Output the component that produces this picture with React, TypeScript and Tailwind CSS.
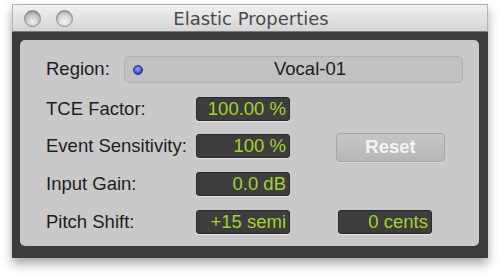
import React from "react";

const font = { fontFamily: '"Liberation Sans", Arial, sans-serif' };

function Light({ dark }: { dark?: boolean }) {
  return (
    <div
      className={`w-[17px] h-[17px] rounded-full border border-[#8c8c8c] ${
        dark
          ? "bg-[radial-gradient(circle_at_50%_70%,#f2f2f2_0%,#c8c8c8_45%,#9a9a9a_100%)]"
          : "bg-[radial-gradient(circle_at_50%_70%,#f6f6f6_0%,#d6d6d6_50%,#a8a8a8_100%)]"
      } shadow-[inset_0_1px_1px_rgba(0,0,0,0.25)]`}
    />
  );
}

function Field({ children, w = "w-[94px]" }: { children: React.ReactNode; w?: string }) {
  return (
    <div
      className={`${w} h-[24px] rounded-[3px] bg-[#3d3d3d] border border-[#2a2a2a] shadow-[0_1px_0_#e6e6e6] flex items-center justify-end pr-[3px] text-[18.5px] leading-none text-[#a5d12a]`}
    >
      {children}
    </div>
  );
}

function Label({ children }: { children: React.ReactNode }) {
  return <div className="w-[150px] text-[18.5px] leading-none text-[#1e1e1e]">{children}</div>;
}

export default function App() {
  return (
    <div className="w-[500px] h-[278px] bg-white pt-[4px] pl-[12px]" style={font}>
      <div className="w-[476px] shadow-[0_6px_10px_rgba(0,0,0,0.35)]">
        <div className="h-[28px] border-t border-l border-r border-[#b4b4b4] bg-[linear-gradient(#f1f1f1,#d4d4d4)] border-b border-b-[#7a7a7a] relative flex items-center">
          <div className="flex items-center gap-[15px] pl-[11px]">
            <Light dark />
            <Light />
          </div>
          <div
            className="absolute inset-0 flex items-center justify-center text-[18px] text-[#4a4a4a] pl-[2px]"
            style={{ fontFamily: '"DejaVu Sans", sans-serif' }}
          >
            Elastic Properties
          </div>
        </div>
        <div className="bg-[#3b3b3b] pl-[8px] pr-[9px] pt-[8px] pb-[12px]">
          <div className="h-[206px] rounded-[5px] bg-[#c9c9c9] pt-[16px] pl-[26px] flex flex-col">
            <div className="flex items-center h-[27px]">
              <div className="w-[78px] text-[18.5px] leading-none text-[#1e1e1e]">Region:</div>
              <div className="w-[339px] h-[27px] rounded-[5px] bg-[#c1c1c1] border border-[#b2b2b2] relative flex items-center justify-center pl-[33px] text-[18.5px] leading-none text-[#1e1e1e]">
                <div className="absolute left-[8px] top-[8px] w-[10px] h-[10px] rounded-full bg-[radial-gradient(circle_at_45%_40%,#9aa8ff_0%,#3a4de0_60%,#20289a_100%)] border border-[#2a2f7a]" />
                Vocal-01
              </div>
            </div>
            <div className="flex items-center mt-[14px] h-[24px]">
              <Label>TCE Factor:</Label>
              <Field>100.00 %</Field>
            </div>
            <div className="flex items-center mt-[13px] h-[24px]">
              <Label>Event Sensitivity:</Label>
              <Field>100 %</Field>
              <div className="ml-[46px] w-[109px] h-[29px] rounded-[4px] border border-[#a6a6a6] bg-[linear-gradient(#c6c6c6,#b6b6b6)] shadow-[0_1px_0_#d8d8d8] flex items-center justify-center text-[18.5px] font-bold text-[#f4f4f4] leading-none mt-[2px]">
                Reset
              </div>
            </div>
            <div className="flex items-center mt-[14px] h-[24px]">
              <Label>Input Gain:</Label>
              <Field>0.0 dB</Field>
            </div>
            <div className="flex items-center mt-[14px] h-[24px]">
              <Label>Pitch Shift:</Label>
              <Field>+15 semi</Field>
              <div className="ml-[48px]">
                <Field>0 cents</Field>
              </div>
            </div>
          </div>
        </div>
      </div>
    </div>
  );
}
